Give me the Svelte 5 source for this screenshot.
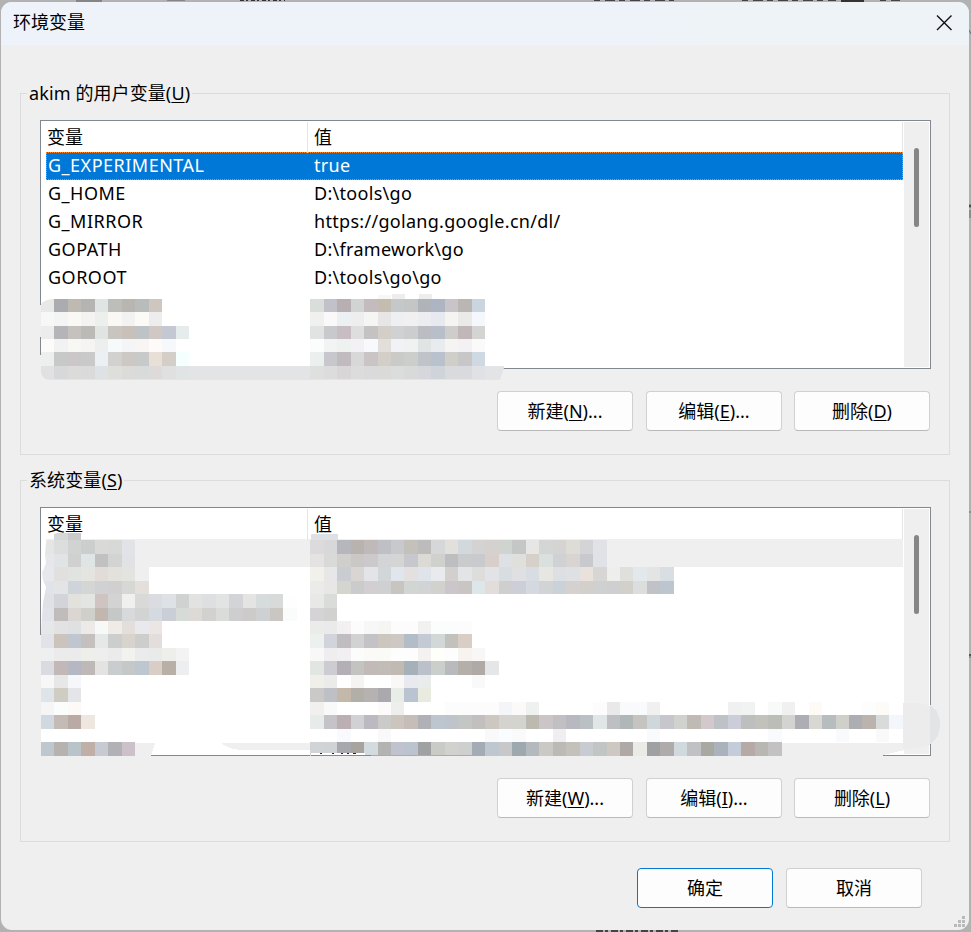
<script>
  const CELL = 13.47;

  const userVars = [
    { name: "G_EXPERIMENTAL", value: "true" },
    { name: "G_HOME", value: "D:\\tools\\go" },
    { name: "G_MIRROR", value: "https://golang.google.cn/dl/" },
    { name: "GOPATH", value: "D:\\framework\\go" },
    { name: "GOROOT", value: "D:\\tools\\go\\go" }
  ];

  // [first column, row, colours]
  const userMosaic = [
    [0, 0, "e8e9e7 abacb0 bfbab1 b4b5b2 dfe5e3 bdbdb9 b9b5b1 b8bdbb d0c6c0"],
    [0, 1, "f7f7f7 f4f4f4 f8f8f5 f5f3f1 edefed faf8f5 f2f2f2 fcfaf7 ededed"],
    [0, 2, "ececec b5b4b8 c5c1bf babab7 e0e5e3 c8c5c0 c9c0b9 bec3c5 d0c8c4 c4c8d2 e6ebeb"],
    [0, 3, "fdfbf9 f2f2f2 f7f7f4 f5f4f2 edefee f7fafa f4f5f6 f8f5f4 fdfaf7 f6f8fb ffffff"],
    [0, 4, "ecefed c8c8c9 cbc6c7 c9c9ca eaf0f3 d2d1d0 cec8c4 c8caca e8dfd7 d4cec8 f5fffe"],
    [0, 5, "e1e1e1 d7d8da dbdbd9 d9dad9 dfe2e5 dededb dbdbda d9dbda dddad9 e0e0e0 e1e4e5"],
    [20, 0, "d9dedc c1c2c9 b7afb1 d1d4d3 c3bbbe c5bcb1 c4c8c9 c4c5c5 b0b4b9 aeb5c2 c8c4c7 bab6b3 cad5df"],
    [20, 1, "f0f0ee faf8f9 edf0f2 eeeeee f5f5f3 e7e5e6 edeff2 f0f0f0 ebedf0 e7e9ee f5f4f2 eaeae8 f4f7fb"],
    [20, 2, "e0e3e2 c8c9cc c9bdc4 dedede c4c2c3 d3cec7 cfd1d3 cccdce bbbdc3 b8bfca cfcdca c1b6b8 d4d4d2"],
    [20, 3, "fafdfc f3f3f3 edf1ef f4f1f4 f7f9fd e2deda f0f2f5 f1f1f1 e0e4e5 e8ecef f6f4f2 f3f1f3 fafafa"],
    [20, 4, "ebf0ef c7c7cd c1babe d8d8d8 cac4c4 d3cec7 cacbc8 cbcecb c0c4ca b9c1cc d0cec9 c7c7c7 cfd9e3"],
    [20, 5, "dee0df dcdcdc d8d6d6 dcdcdc dadadb dadad9 dadddc d8d9d9 d5d7dc cfd3da d9dadc d9dadd dfe1e4"]
  ];

  const systemMosaic = [
    [0, 0, "e3e6e4 dcdddf d1d2d2 cbcecc d9d9d8 d7d9d7 e1e3e6"],
    [0, 1, "e6e7ea e1e4e5 d0d0d0 dfe4e4 c2c1c2 d3d3d3 e1e2e6"],
    [0, 2, "e6e8ed e2e0de e0e3e0 e5e4e1 e2dcd9 e2e1dc e3e4df efefef"],
    [0, 3, "e2e3ea e2e4e6 ced4da d4d5d5 d0d1d2 d1cfcf d5d8d5 e5dfdc"],
    [0, 4, "e0e1e5 d2d4d9 e2e1dc e3e5e2 cfc4c2 d3d3d4 f0f1ee d8d9d8 dadce1 dee2e6 cfd2d0 e2e2e1 dedfe0 e2e3e3 d3d4d7 e4e4e2 d6dbdb d8dad9 fefefe"],
    [0, 5, "e2e3ea c0bcbb dbd6d1 cfd0ca c1b7ae c6c7c7 d7d9db d2d4d4 d5d9e0 c9ced7 d6dbd8 ddd9d4 d3d0d0 d9dcd8 cecdcf cdcaca ced0d2 cac6c1 fafcfb"],
    [0, 6, "e6e7e9 e1e2e1 dfe0e1 ebeae8 f6f9f8 efebe6 e3dddc e8e9ed ebe6e4"],
    [0, 7, "e1e3e8 cdc3bd c0c6cf c4c0bf e6e8e7 cccdcd d8d4cd cdcecc e3dddb"],
    [0, 8, "eeeff1 ebebeb ebebeb eeeeeb eeeeee ebebeb f2f2ef eaebed e9eaea eeeeea f3f3f3"],
    [0, 9, "dadbe0 c3b8b8 b5b8c3 beb9b7 e5e3e1 c9cdcd c4c8c8 bec7d0 d9cdc5 b8b0a6 eceeef"],
    [0, 10, "f7f7f7 e7e7e7 f5f7fa"],
    [0, 11, "dfe4e8 cfccc4 e3e5e9"],
    [0, 12, "f5f5f5 fafdfc fcf9f7"],
    [0, 13, "d0d9e0 c4bbb7 b9aaa6 ede7e0"],
    [0, 15, "bdc7cd b5b2af b9c4ca c0afa7 c7cad2 b2b2b6 ccc1c9"],
    [20, 0, "dcdadc d8d8d8 b6b7bc b8b3af bfb9b9 bfc0c6 c8c9cd c4c0ba bbbcbb d5d7d8 e1e0da d2d9dd d4d2d2 d4d1cf d0d4d1 c5c6c6 e7e6e4 d4d6d5 d5d4d3 dedcd6 d4d4d7 e0e2e5"],
    [20, 1, "e4e3e1 d9d9d7 d0cfcb cac8c7 cbc9cb d2d4d6 d5d5d6 c6c8cd dbdad5 d0d1cd bebec1 c9cbcd c8cacd d8cfca dde0e5 dfdfdc d5d1ca dae0dd cfd1d4 d8d4d2 c7c9cc e0e2e7"],
    [20, 2, "f1f0eb e8e7e8 c9ccd1 d8d5d3 e2e4e7 d1d6d9 e1e5ec e3e0df dee4ea e9eaee d3cfcf e3e4e5 dddddb e2e3e7 d7dde0 e0e0e3 d7dde2 e8e6e1 dce0e3 dfe0e4 e9e2dc d7d6d4 eeefed dfdfdc e2e8ec e2e5e4 d9dee2"],
    [20, 3, "ebebea e8e7e5 d5d5cf cbcbcb d2ced1 cfd0d2 c8c4bf d1d5d3 d2d3d4 d1d1ce cac6cb c9c5c3 dde7ea e2ddda cfcfcf cccfd8 d4d8df d2d3d5 c9d1d9 d5d1d1 d3cfcb cfd1d0 cfcfd1 d1d0cb dcdedd c1c2c8 bdc5ce"],
    [20, 4, "e8e8e7 dadbdb"],
    [20, 5, "d5d3d5 d1d1cf"],
    [20, 6, "ebebea ebeaea f2f0f1 fcfcfc f7f7f7 f5f5f4 fcfcfc fcfcfc f2f1f0 fbfdfc fbfdfc fcfcfc"],
    [20, 7, "ecf0ef d1d4da c0bcc0 d3d2d3 c4c2c6 ccc6be cdc8c4 b2bdc7 c4cad3 d1d8d7 c3c1bb d9cec6"],
    [20, 8, "f8f8f8 efedf0 f1eff1 fcfcfc fbfaf7 fafaf7 fdfdfd fdfdfd f3f2f0 fefefb fdfdfd f6f3f0 f9f7f6"],
    [20, 9, "e2e6e3 cdccd2 b4aeb5 c3c4c1 c1bab9 c1bcb6 c0bab2 a5b0b9 bbc0cb cacfcb b8babc b4afa8 b0aaa6 e5e6e8"],
    [20, 10, "f0efea ebebea ffffff f5f4f2 ffffff ffffff faf8f6 e8eaef e9ecea"],
    [32, 10, "f9f9f9"],
    [20, 11, "cac9c8 bfc0c5 c4b8aa b2afa8 b6b2b1 aba9ae e8ede8 bac3d0 e9eae0"],
    [20, 12, "f1f0ef f9f9fa ffffff ffffff ffffff fcfbf9 eeeeed"],
    [30, 12, "fcfcfc fcfcfc fcfcfc fcfcfc f3f5f8 fbfaf8 eef1f0"],
    [41, 12, "fcfcfc e9e9e9 f8fafb f8fafb f0f0f0"],
    [51, 12, "f0f0f0 f1f3f2"],
    [54, 12, "f7faf9 f0f0f0"],
    [57, 12, "fefbf7"],
    [61, 12, "fdfdfd fcfbf8"],
    [20, 13, "e7ecea c5c2c8 bbafb3 d1d0d2 bcbac0 cacbc9 cbc5be c6bdb9 b0b0b7 bdc6cf bfc4cb c4c5c5 c1c0be cdc7c2 d4d3cd d4d4cf bbb9b0 ccc5c8 c1bfc3 b8b9c0 bac0c4 e0e5e5 bebfc2 b0b8b7"],
    [44, 13, "c6c4c0 d0d7da c7c6cd cfd2cd bfbbb4 d3c8cb bec2c6 cbced8 bcbfbd c2c1bb bdbdb7 d3d3d1 adaeb4 d8d7d1 b7bcbf ced0c9 adaeb4 bbb4ae d9dbdb f3f6fa"],
    [22, 14, "f8fafd"],
    [25, 14, "f9f9f9"],
    [33, 14, "f9f9fb fafdff fafafa"],
    [38, 14, "f1eef1"],
    [45, 14, "f8fafc"],
    [54, 14, "f9fafc"],
    [59, 14, "f8fafc"],
    [62, 14, "f9f9f9"],
    [20, 15, "d0d4d6 d0d3d6 a8a7ad a7a4a0 d3dbdf b3b3b2 c0c2cd bbc3ce a0a1a3 c9cbc7 d1d1ce cdd0ce a4abb5 bec7d0 c8c8cb 9ea8af b4b9bd cac9c6 bbbab5 c4c1ba c8cbd2 c1c6c5 cec8c3 aea9a7"],
    [44, 15, "eaeae7 9fa0a2 b0abab d0d9dd c0c1c4 a7a9a2 abb2bb c5ccd9 b5aaa6 b8b7b1 c4c1c2"]
  ];

  function toCells(rows, top) {
    return rows.flatMap(([col, row, colours]) =>
      colours.split(" ").map((fill, i) => {
        const x = Math.round(0.8 + (col + i) * CELL);
        const y = Math.round(top + row * CELL);
        return {
          x,
          y,
          w: Math.round(0.8 + (col + i + 1) * CELL) - x,
          h: Math.round(top + (row + 1) * CELL) - y,
          fill: "#" + fill
        };
      })
    );
  }

  const userCells = toCells(userMosaic, 178.6);
  const systemCells = toCells(systemMosaic, 33.2);

  let selected = $state(0);
</script>

{#snippet key(label, letter, tail)}
  {label}(<u>{letter}</u>){tail}
{/snippet}

{#snippet header()}
  <div class="head">
    <span class="col-name">变量</span>
    <span class="col-value">值</span>
  </div>
{/snippet}

<div class="desktop">
  <svg class="behind" width="971" height="932" aria-hidden="true">
    <path d="M76 0h26v2h-26zM167 0h18v1h-18z" fill="#858585" />
    <path d="M240 0.5h45" stroke="#333" stroke-width="1" stroke-dasharray="4 2 2 3" />
    <path d="M594 0.5h80M742 0.5h94M880 0.5h20" stroke="#444" stroke-width="1" stroke-dasharray="6 5 10 4" />
    <path d="M841 0h23v2h-23z" fill="#333" />
    <path d="M596 931h82" stroke="#444" stroke-width="2" stroke-dasharray="7 2 3 3" />
    <path d="M969 30l2 4M969 205h2v2h-2zM970 210v8M969 512h2M970 654v4" stroke="#666" />
    <path d="M969 654h2v2h-2z" fill="#555" />
  </svg>

  <main class="dialog">
    <header class="titlebar">
      <h1>环境变量</h1>
      <button class="close" aria-label="关闭">
        <svg width="16" height="16" viewBox="0 0 16 16">
          <path d="M1 0.5l14.5 14.5M15.5 0.5l-14.5 14.5" fill="none" stroke="#111" stroke-width="1.4" />
        </svg>
      </button>
    </header>

    <section class="group">
      <h2>akim {@render key("的用户变量", "U", "")}</h2>
      <div class="list">
        <div class="table">
          {@render header()}
          {#each userVars as item, i}
            <!-- svelte-ignore a11y_click_events_have_key_events, a11y_no_static_element_interactions -->
            <div class="row" class:selected={selected === i} onclick={() => (selected = i)}>
              <span class="col-name">{item.name}</span>
              <span class="col-value">{item.value}</span>
            </div>
          {/each}
        </div>
        <div class="scroll"><div class="thumb"></div></div>
        <svg class="mosaic" width="464" height="262" shape-rendering="crispEdges" aria-hidden="true">
          <defs>
            <clipPath id="userSmudge">
              <path d="M12 170H464V248L460 260H9Q1 259 1 250V184Q4 180 12 179z" />
            </clipPath>
          </defs>
          <path d="M0 185h1v32h-1zM0 235h1v25h-1z" fill="#efefef" />
          <g clip-path="url(#userSmudge)">
            <path d="M1 246h463v14h-463z" fill="#e3e4e6" />
            <path d="M338 175h13v4h-13z" fill="#f9f7f3" />
            <path d="M352 174h13v5h-13zM379 174h13v5h-13z" fill="#ededed" />
            {#each userCells as c}
              <rect x={c.x} y={c.y} width={c.w} height={c.h} fill={c.fill} />
            {/each}
          </g>
        </svg>
      </div>
      <div class="actions">
        <button>{@render key("新建", "N", "...")}</button>
        <button>{@render key("编辑", "E", "...")}</button>
        <button>{@render key("删除", "D", "")}</button>
      </div>
    </section>

    <section class="group">
      <h2>{@render key("系统变量", "S", "")}</h2>
      <div class="list">
        <div class="table">
          {@render header()}
          <div class="row inactive"></div>
        </div>
        <div class="scroll"><div class="thumb"></div></div>
        <svg class="mosaic" width="902" height="262" shape-rendering="crispEdges" aria-hidden="true">
          <defs>
            <clipPath id="systemSmudge">
              <path d="M32 24H902V250H1V125L2 109 3 96 5 85 6 80 3 73 2 66 6 56 5 48 6 35 10 31 14 27 22 24z" />
            </clipPath>
          </defs>
          <path d="M0 128h1v121h-1z" fill="#efefef" />
          <path d="M1 236h114l-4 13h-111v-1zM181 236h684v7h-660q-16 0-24-7z" fill="#efefef" />
          <path d="M445 236h420v7l-22 5v1h-398z" fill="#efefef" />
          <path d="M863 196h12q25 1 25 22 0 20-21 23l-16 2z" fill="#ececed" />
          <path d="M890 198q10 6 10 19 0 14-10 20z" fill="#e2e4e6" />
          <g clip-path="url(#systemSmudge)">
            <path d="M14 26h27v7h-27z" fill="#d6d8d8" />
            <path d="M28 26h13v7h-13z" fill="#c9cbcb" />
            <path d="M271 27h27v6h-27z" fill="#dde0e4" />
            {#each systemCells as c}
              <rect x={c.x} y={c.y} width={c.w} height={c.h} fill={c.fill} />
            {/each}
          </g>
          <path d="M271 246h54v2h-54z" fill="#fff" />
          <path d="M280 246h2v1h-2zM292 246h2v1h-2zM301 246h2v1h-2zM307 246h2v1h-2zM313 246h3v1h-3z" fill="#222" />
          <path d="M271 248h60v1h-60z" fill="#828790" />
          <path d="M331 248h114v1h-114z" fill="#a9abb0" />
        </svg>
      </div>
      <div class="actions">
        <button>{@render key("新建", "W", "...")}</button>
        <button>{@render key("编辑", "I", "...")}</button>
        <button>{@render key("删除", "L", "")}</button>
      </div>
    </section>

    <footer>
      <button class="primary">确定</button>
      <button>取消</button>
    </footer>

    <svg class="grip" width="12" height="12" aria-hidden="true">
      <path d="M8 0h3v3h-3zM4 4h3v3h-3zM8 4h3v3h-3zM0 8h3v3h-3zM4 8h3v3h-3zM8 8h3v3h-3z" fill="#bababa" />
    </svg>
  </main>
</div>

<style>
  :global(body) {
    margin: 0;
    overflow: hidden;
  }

  .desktop {
    position: relative;
    box-sizing: border-box;
    width: 971px;
    height: 932px;
    padding: 2px 2px 2px 1px;
    background: #b2b2b2;
    font-family: "Noto Sans", "Noto Sans CJK SC", sans-serif;
    font-size: 18px;
    line-height: 28px;
    color: #000;
  }

  .behind {
    position: absolute;
    top: 0;
    left: 0;
  }

  .dialog {
    position: relative;
    display: flex;
    flex-direction: column;
    height: 928px;
    border-radius: 11px;
    background: #efefef;
    overflow: hidden;
  }

  .titlebar {
    display: flex;
    flex: none;
    justify-content: space-between;
    align-items: center;
    height: 43px;
    padding: 0 17px 0 12px;
    background: linear-gradient(90deg, #eef3fb, #eef3f8);
  }

  h1,
  h2 {
    margin: 0;
    font-size: 18px;
    font-weight: 400;
  }

  h1 {
    line-height: 41px;
    height: 43px;
  }

  .close {
    display: flex;
    width: 16px;
    height: 16px;
    min-width: 0;
    padding: 0;
    margin-bottom: 1px;
    border: none;
    background: none;
  }

  .group {
    flex: none;
    box-sizing: border-box;
    width: 930px;
    height: 362px;
    margin: 48px 0 0 19px;
    padding: 0 18px 0 19px;
    border: 1px solid #dcdcdc;
  }

  .group + .group {
    margin-top: 25px;
  }

  h2 {
    width: fit-content;
    height: 28px;
    margin: -15px 0 13px -13px;
    padding: 0 2px;
    background: #efefef;
    letter-spacing: 0.1px;
  }

  .list {
    position: relative;
    display: flex;
    box-sizing: border-box;
    width: 891px;
    height: 249px;
    padding: 1px;
    border: 1px solid #828790;
    background: #fff;
  }

  .table {
    box-sizing: border-box;
    width: 862px;
    padding-right: 1px;
  }

  .head,
  .row {
    display: grid;
    grid-template-columns: 266px 1fr;
  }

  .head {
    height: 30px;
    border-right: 1px solid #e5e5e5;
    line-height: 31px;
  }

  .head .col-name {
    padding-left: 5px;
    border-right: 1px solid #e5e5e5;
    box-sizing: border-box;
  }

  .head .col-value {
    padding-left: 6px;
  }

  .row {
    box-sizing: border-box;
    height: 28px;
    margin-left: 4px;
    padding-left: 2px;
    white-space: nowrap;
    line-height: 27px;
  }

  .row .col-name {
    letter-spacing: 0.5px;
  }

  .row .col-value {
    letter-spacing: 0.3px;
  }

  .row.selected {
    padding-left: 1px;
    border: 1px dotted #ff8728;
    background: #0078d7;
    line-height: 25px;
    color: #fff;
  }

  .row.inactive {
    height: 28px;
    background: #efefef;
  }

  .scroll {
    width: 25px;
    background: #efefef;
  }

  .thumb {
    width: 5px;
    height: 79px;
    margin: 26px 0 0 10px;
    border-radius: 3px;
    background: #868686;
  }

  .mosaic {
    position: absolute;
    top: -1px;
    left: -1px;
    overflow: visible;
    pointer-events: none;
  }

  .actions {
    display: flex;
    justify-content: flex-end;
    gap: 12px;
    margin: 22px 1px 0 0;
  }

  .actions button:first-child {
    margin-right: 1px;
  }

  button {
    box-sizing: border-box;
    width: 136px;
    height: 40px;
    padding: 0;
    border: 1px solid #d0d0d0;
    border-bottom-color: #bababa;
    border-radius: 4px;
    background: #fdfdfd;
    font: inherit;
    color: #000;
  }

  u {
    text-underline-offset: 2px;
    text-decoration-thickness: 1px;
  }

  footer {
    display: flex;
    justify-content: flex-end;
    gap: 13px;
    margin: 26px 47px 0 0;
  }

  .primary {
    border-color: #0078d4;
  }

  .grip {
    position: absolute;
    right: 3px;
    bottom: 2px;
  }
</style>
